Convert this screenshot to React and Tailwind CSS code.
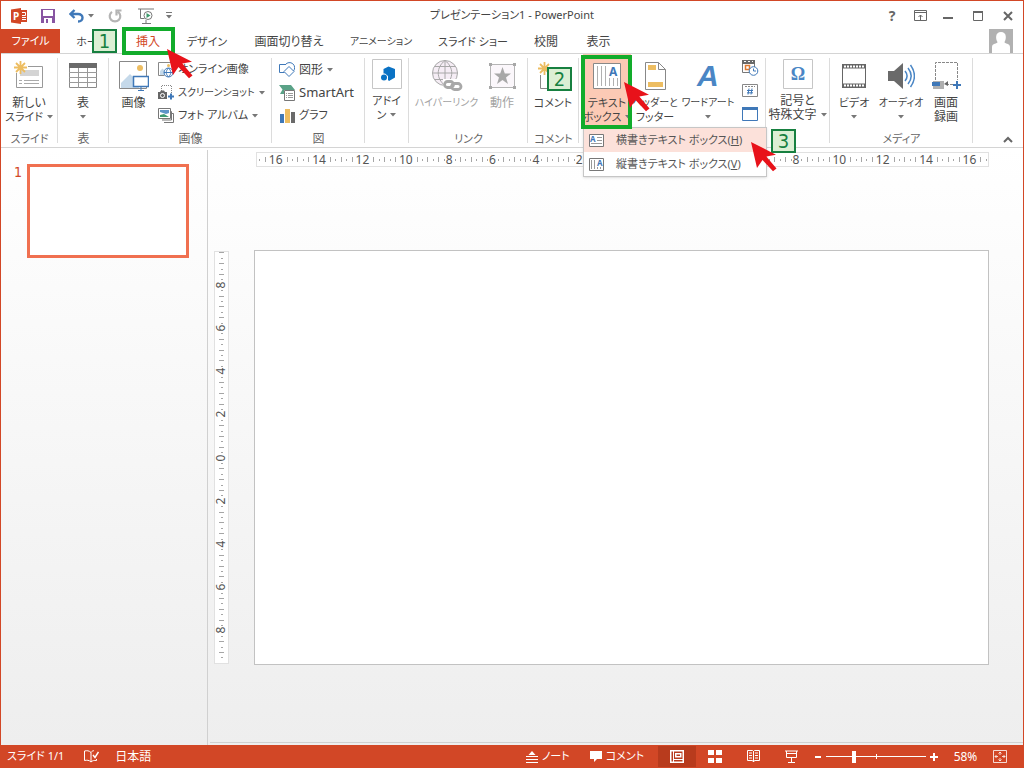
import React, { useState } from 'react';

const tabs = [
    { label: 'ホーム', width: 'w-16' },
    { label: '挿入', width: 'w-12' },
    { label: 'デザイン', width: 'w-[70px]' },
    { label: '画面切り替え', width: 'w-[94px]' },
    { label: 'アニメーション', width: 'w-[90px]' },
    { label: 'スライド ショー', width: 'w-[94px]' },
    { label: '校閲', width: 'w-[52px]' },
    { label: '表示', width: 'w-[53px]' },
];

const hRuler = [16, 14, 12, 10, 8, 6, 4, 2, 0, 2, 4, 6, 8, 10, 12, 14, 16];
// the outer cells only carry ticks
const vRuler = [null, 8, 6, 4, 2, 0, 2, 4, 6, 8, null];

// Katakana labels are set smaller than kanji ones, long ones smaller still
const labelSize = (label) => {
    if (/^[ァ-ヶーと]{5,}$/.test(label)) return 'text-[10px]';
    return /[ァ-ヶ]/.test(label) ? 'text-[11px]' : 'text-xs';
};

const Icon = ({ w, h, children, className = '' }) => (
    <svg width={w} height={h} viewBox={`0 0 ${w} ${h}`} fill="none" className={`shrink-0 ${className}`} aria-hidden="true">
        {children}
    </svg>
);

const Caret = ({ color = '#777' }) => (
    <Icon w={6} h={4}><path d="M0 0h6L3 3.5z" fill={color} /></Icon>
);

// Red pointer, tip at the top left corner
const Pointer = ({ className }) => (
    <Icon w={26} h={30} className={`pointer-events-none absolute z-40 ${className}`}>
        <path d="M0 0L25 12.700L15.300 14.500L25.500 26.500L22 29.300L11.500 18L6 26z" fill="#e8121a" />
    </Icon>
);

const Step = ({ n, className }) => (
    <span className={`absolute z-30 flex h-6 w-[25px] items-center justify-center border-2 border-[#178040] bg-[#dcefd4] font-['DejaVu_Sans_Condensed','DejaVu_Sans',sans-serif] text-xl leading-5 text-[#178040] ${className}`}>
        {n}
    </span>
);

const Spark = () => (
    <path d="M6.500 0v13M0 6.500h13M2 2l9 9M11 2l-9 9" stroke="#edbd61" strokeWidth="1.800" />
);

/* ---------- quick access ---------- */

const PptLogo = () => (
    <Icon w={17} h={16}>
        <path d="M8 2h8v12H8z" fill="#d24726" />
        <path d="M11 4.500h3.500v3H11M11 9.500h4M11 11.500h4" stroke="#fff" />
        <path d="M0 1.500L10 0v16L0 14.500z" fill="#d24726" />
        <text x="2" y="12" fontSize="10" fontWeight="700" fill="#fff">P</text>
    </Icon>
);

const SaveIcon = () => (
    <Icon w={14} h={14}>
        <path d="M0 0h14v14H0z" fill="#8855a2" />
        <path d="M2 1h10v6H2zM3 9h8v5H3z" fill="#fff" />
        <path d="M5 10h2v4H5z" fill="#8855a2" />
    </Icon>
);

const UndoIcon = () => (
    <Icon w={15} h={14}>
        <path d="M5.500 1L1.500 5L5.500 9M2 5h7c6 0 6 7.500 0 7.500" stroke="#3f78b8" strokeWidth="2.400" />
    </Icon>
);

const RedoIcon = () => (
    <Icon w={14} h={14}>
        <path d="M4 2.800a5.300 5.300 0 1 0 6 0M8.500 6.500V1.500h5" stroke="#b4b4b4" strokeWidth="2.200" />
    </Icon>
);

const ShowIcon = () => (
    <Icon w={16} h={16}>
        <path d="M0 1h16M2.500 1v9.500h4M8 12v3M4 15.500h9" stroke="#777" />
        <circle cx="10" cy="7.500" r="4" fill="#fff" stroke="#777" />
        <path d="M8.500 5l4 2.500-4 2.500z" fill="#3c9a6b" />
    </Icon>
);

/* ---------- ribbon icons ---------- */

const NewSlideIcon = () => (
    <Icon w={30} h={30}>
        <path d="M2.500 12v14.500h26V5.500H14" stroke="#999" />
        <path d="M6 9h19v6H6z" fill="#d4d4d4" />
        <path d="M5 19.500h3M5 22.500h3M10 19.500h15M10 22.500h15" stroke="#aaa" />
        <Spark />
    </Icon>
);

const TableIcon = () => (
    <Icon w={28} h={26}>
        <path d="M.5.5h27v24H.5z" fill="#fff" stroke="#8a8a8a" />
        <path d="M0 0h28v5H0z" fill="#6a6a6a" />
        <path d="M0 9.500h28M0 14.500h28M0 19.500h28M9.500 5v20M18.500 5v20" stroke="#9a9a9a" />
    </Icon>
);

const PictureIcon = () => (
    <Icon w={30} h={30}>
        <path d="M.5.5h27v27H.5z" fill="#fff" stroke="#888" />
        <circle cx="21" cy="7" r="3" fill="#edbd61" />
        <path d="M2 27V22l9-9 9 9v5z" fill="#c5d9ea" />
        <path d="M14.500 15.500h15v10h-15z" fill="#fff" stroke="#3f78b8" strokeWidth="1.500" />
        <path d="M22 26v3M19 29.500h6" stroke="#3f78b8" />
    </Icon>
);

const OnlinePictureIcon = () => (
    <Icon w={16} h={16}>
        <path d="M14.500 6V.5H.5v13h6" stroke="#888" />
        <circle cx="10.500" cy="3.500" r="1.500" fill="#edbd61" />
        <path d="M2 13V9l2.500-2.500L8 10l-1 3z" fill="#c5d9ea" />
        <circle cx="10.500" cy="10.500" r="4.500" fill="#fff" stroke="#3f78b8" />
        <path d="M6 10.500h9M10.500 6c-3 3-3 6 0 9M10.500 6c3 3 3 6 0 9" stroke="#3f78b8" />
    </Icon>
);

const ScreenshotIcon = () => (
    <Icon w={16} h={15}>
        <path d="M3.500 6V.5h10V9" stroke="#888" strokeDasharray="1 1" />
        <path d="M0 7h2l1-1.500h3L7 7h2v7H0z" fill="#666" />
        <circle cx="4.500" cy="10.500" r="2" stroke="#fff" />
        <path d="M13 8.500v6M10 11.500h6" stroke="#3f78b8" strokeWidth="2" />
    </Icon>
);

const AlbumIcon = () => (
    <Icon w={16} h={15}>
        <path d="M12 3.500h1.500v8.500H4M14 5.500h1.500v9H6" stroke="#777" />
        <path d="M.5.500h12v10H.5z" fill="#fff" stroke="#777" />
        <path d="M2 2h9v3L8 6 2 4z" fill="#5d94c8" />
        <path d="M2 9V7l4-1 5 3z" fill="#3f9a74" />
    </Icon>
);

const ShapesIcon = () => (
    <Icon w={16} h={15}>
        <path d="M7 2.500H.5v8h5" stroke="#3f78b8" />
        <path d="M6.500 2.500a5 5 0 1 1 8 6.500" stroke="#3f78b8" />
        <path d="M10 4.500l5 5-5 5-5-5z" fill="#fff" stroke="#3f78b8" />
    </Icon>
);

const SmartArtIcon = () => (
    <Icon w={16} h={16}>
        <path d="M0 0h12l4 5H5v4H1L3.500 4.500z" fill="#5aa287" />
        <path d="M5.500 5.500h10v10h-10z" fill="#fff" stroke="#777" />
        <path d="M7 8.500h1M7 10.500h1M7 12.500h1M9 8.500h5M9 10.500h5M9 12.500h5" stroke="#999" />
    </Icon>
);

const ChartIcon = () => (
    <Icon w={15} h={14}>
        <path d="M0 5h4v9H0z" fill="#3f78b8" />
        <path d="M5 0h5v14H5z" fill="#edbd61" />
        <path d="M11 3h4v11h-4z" fill="#6a6a6a" />
    </Icon>
);

const AddinIcon = () => (
    <Icon w={30} h={30}>
        <path d="M.5.5h29v29H.5z" fill="#fff" stroke="#c6c6c6" />
        <path d="M11.500 10l5-2.500 6.500 2.500v8.500L17 22l-1-1v-4l-3-2.500h-1.500z" fill="#0a72c4" />
        <circle cx="12" cy="18.500" r="3" fill="#0a72c4" />
    </Icon>
);

const LinkIcon = () => (
    <Icon w={32} h={32}>
        <circle cx="14" cy="13" r="12.500" fill="#f5edf5" stroke="#a8a8a8" />
        <path d="M2 13h24M14 .5v25M4 6.500h20M4 19.500h20M14 .5c-9 7-9 18 0 25M14 .5c9 7 9 18 0 25" stroke="#a8a8a8" />
        <path d="M12 19h20v12H12z" fill="#fff" />
        <rect x="13.500" y="21.500" width="9" height="6" rx="3" stroke="#a8a8a8" strokeWidth="2.800" />
        <rect x="20.500" y="23.500" width="9.500" height="6" rx="3" stroke="#a8a8a8" strokeWidth="2.800" />
    </Icon>
);

const ActionIcon = () => (
    <Icon w={27} h={26}>
        <path d="M1.500 1.500h24v23h-24z" fill="#fbf7fb" stroke="#b5b5b5" />
        <path d="M0 0h3v3H0zM24 0h3v3h-3zM0 23h3v3H0zM24 23h3v3h-3z" fill="#a8a8a8" />
        <path d="M13.500 4l2.300 6.500h6.200l-5 4 2 6.500-5.500-4-5.500 4 2-6.500-5-4h6.200z" fill="#a8a8a8" />
    </Icon>
);

const CommentIcon = () => (
    <Icon w={31} h={29}>
        <path d="M2.500 13v13.500h7" stroke="#888" />
        <Spark />
    </Icon>
);

const TextBoxIcon = () => (
    <Icon w={28} h={26}>
        <path d="M.5.5h27v25H.5z" fill="#fff" stroke="#888" />
        <path d="M4.500 3v20M8.500 3v20M12.500 3v20M16.500 15v8M20.500 15v8M24.500 15v8" stroke="#b0b0b0" />
        <text x="16" y="13" fontSize="12" fontWeight="700" fill="#3f78b8">A</text>
    </Icon>
);

const HeaderIcon = () => (
    <Icon w={21} h={28}>
        <path d="M.5.500h13l7 7v20H.5z" fill="#fff" stroke="#888" />
        <path d="M13.500.5v7h7" stroke="#888" />
        <path d="M3 3h8v5H3zM3 20h15v5H3z" fill="#edbd61" />
    </Icon>
);

const WordArtIcon = () => (
    <Icon w={24} h={34}>
        <text x="1" y="27" fontSize="30" fontStyle="italic" fontWeight="700" fontFamily="Liberation Sans" fill="#4a86c5">A</text>
    </Icon>
);

const DateIcon = () => (
    <Icon w={17} h={16}>
        <path d="M.5 1.500h12v11H.5z" fill="#fff" stroke="#777" />
        <path d="M0 0h13v4H0z" fill="#6a6a6a" />
        <path d="M2 1.500h2M6 1.500h2M10 1.500h1" stroke="#fff" />
        <path d="M3.500 5.500h4v4h-4z" stroke="#e07a30" strokeWidth="1.500" />
        <circle cx="11.500" cy="11" r="4.300" fill="#fff" stroke="#3f78b8" />
        <path d="M11.500 8.500V11h2.500" stroke="#3f78b8" />
    </Icon>
);

const NumberIcon = () => (
    <Icon w={16} h={13}>
        <path d="M.5.5h15v12H.5z" fill="#fff" stroke="#888" />
        <path d="M3 2.500h10" stroke="#888" strokeDasharray="2 1" />
        <path d="M7 4.500l-1 6M10 4.500l-1 6M5 6.500h6M5 8.800h6" stroke="#3f78b8" />
    </Icon>
);

const ObjectIcon = () => (
    <Icon w={16} h={14}>
        <path d="M.5.5h15v13H.5z" fill="#fff" stroke="#3f78b8" />
        <path d="M0 0h16v3H0z" fill="#3f78b8" />
    </Icon>
);

const OmegaIcon = () => (
    <Icon w={30} h={30}>
        <path d="M.5.5h29v29H.5z" fill="#fff" stroke="#c6c6c6" />
        <text x="15" y="21" textAnchor="middle" fontSize="18" fontWeight="700" fontFamily="Liberation Serif" fill="#4a86c5">Ω</text>
    </Icon>
);

const VideoIcon = () => (
    <Icon w={24} h={24}>
        <path d="M.5.5h23v23H.5z" fill="#fff" stroke="#666" />
        <path d="M0 0h24v4.500H0zM0 19.500h24V24H0z" fill="#666" />
        <path d="M2 2.500h21M2 21.500h21" stroke="#fff" strokeWidth="2" strokeDasharray="2 1" />
    </Icon>
);

const AudioIcon = () => (
    <Icon w={27} h={26}>
        <path d="M0 8h6l9-8v26l-9-8H0z" fill="#6a6a6a" />
        <path d="M17 8c2.500 3 2.500 7 0 10M20 5c4 5 4 11 0 16M22.500 2c5 7 5 15 0 22" stroke="#4a86c5" strokeWidth="1.500" />
    </Icon>
);

const RecordIcon = () => (
    <Icon w={29} h={28}>
        <path d="M3.500 18V.5h22V18M14 22.500h7" stroke="#888" strokeDasharray="3 1" />
        <path d="M1 19h11v8H1z" fill="#b0b0b0" />
        <path d="M0 20h8v4H0z" fill="#3f78b8" />
        <path d="M12 22l4-3v5z" fill="#666" />
        <path d="M25 19v8M21 23h8" stroke="#3f78b8" strokeWidth="2" />
    </Icon>
);

const HorizontalTextIcon = () => (
    <Icon w={15} h={13}>
        <path d="M.5.5h14v12H.5z" fill="#fff" stroke="#777" />
        <text x="1" y="8" fontSize="8" fontWeight="700" fill="#3f78b8">A</text>
        <path d="M8 3.500h5M8 6.500h5M2 9.500h11" stroke="#999" />
    </Icon>
);

const VerticalTextIcon = () => (
    <Icon w={15} h={13}>
        <path d="M.5.500h14v12H.5z" fill="#fff" stroke="#777" />
        <text x="8" y="8" fontSize="8" fontWeight="700" fill="#3f78b8">A</text>
        <path d="M2.500 2v9M5.500 2v9M8.500 9v2M11.500 9v2" stroke="#999" />
    </Icon>
);

/* ---------- ribbon parts ---------- */

const Group = ({ label, width, children }) => (
    <section className={`relative flex h-[93px] shrink-0 flex-col ${width}`}>
        <div className="flex h-[77px] items-start">{children}</div>
        {label && <div className={`text-center leading-4 text-[#666] ${labelSize(label)}`}>{label}</div>}
        <span className="absolute right-0 top-1 h-[85px] w-px bg-[#dcdcdc]" />
    </section>
);

// lines holds one or two rows; a caret follows the last row or stands below it
const BigButton = ({ icon, lines, caret, width, raised, disabled, className = '', children }) => (
    <div className={`relative h-[73px] shrink-0 ${width}`}>
        <button type="button" disabled={disabled} className={`flex h-full w-full flex-col items-center ${disabled ? 'text-[#a3a3a3]' : 'text-[#444]'} ${className}`}>
            <span className={`flex shrink-0 items-center justify-center ${raised ? 'h-10' : 'h-[42px] pt-0.5'}`}>{icon}</span>
            {lines.map((line, i) => (
                <span key={line} className={`flex h-3.5 shrink-0 items-center gap-1 whitespace-nowrap ${labelSize(line)}`}>
                    {line}
                    {caret && lines.length === 2 && i === 1 && <Caret />}
                </span>
            ))}
            {caret && lines.length === 1 && <span className="flex h-3.5 items-center"><Caret /></span>}
        </button>
        {children}
    </div>
);

const SmallButton = ({ icon, label, caret, className }) => (
    <button type="button" className={`flex h-[23px] items-center gap-1 whitespace-nowrap text-[#444] ${className || labelSize(label)}`}>
        <span className="flex w-4 shrink-0 justify-center">{icon}</span>
        {label}
        {caret && <Caret />}
    </button>
);

const Tick = ({ index, vertical }) => {
    if (index === 4) return <span className="flex-1" />;
    const long = index % 2 === 0;
    return (
        <span className={`flex flex-1 ${vertical ? 'flex-col items-center' : 'items-center'}`}>
            <span className={`bg-[#a6a6a6] ${vertical ? (long ? 'h-px w-[5px]' : 'h-px w-[2px]') : (long ? 'h-[5px] w-px' : 'h-[2px] w-px')}`} />
        </span>
    );
};

const Ruler = ({ marks, vertical, className }) => (
    <div className={`flex overflow-hidden border border-[#e1e1e1] bg-white text-xs leading-3 text-[#555] ${className}`}>
        <div className={vertical ? '-my-8 flex flex-1 flex-col' : '-mx-[3px] flex flex-1'}>
            {marks.map((mark, i) => (
                <div key={i} className={`relative flex flex-1 ${vertical ? 'flex-col' : ''}`}>
                    {[0, 1, 2, 3, 4, 5, 6, 7].map((n) => <Tick key={n} index={n} vertical={vertical} />)}
                    {mark !== null && (
                        <span className="absolute inset-0 flex items-center justify-center">
                            <span className={vertical ? '-rotate-90' : 'bg-white px-px'}>{mark}</span>
                        </span>
                    )}
                </div>
            ))}
        </div>
    </div>
);

const TitleBar = () => (
    <header className="grid h-7 grid-cols-[1fr_auto_1fr] items-center pt-px">
        <div className="flex items-center pl-2.5">
            <PptLogo />
            <button type="button" aria-label="上書き保存" className="ml-[13px]"><SaveIcon /></button>
            <button type="button" aria-label="元に戻す" className="ml-3.5 flex items-center gap-1"><UndoIcon /><Caret /></button>
            <button type="button" aria-label="やり直し" className="ml-3.5"><RedoIcon /></button>
            <button type="button" aria-label="スライド ショーの開始" className="ml-4"><ShowIcon /></button>
            <button type="button" aria-label="クイック アクセスのカスタマイズ" className="ml-3">
                <Icon w={6} h={7}><path d="M0 .5h6" stroke="#777" /><path d="M0 3h6L3 6.500z" fill="#777" /></Icon>
            </button>
        </div>
        <h1 className="text-[11px]">プレゼンテーション1 - PowerPoint</h1>
        <div className="flex items-center justify-end gap-4 pr-2.5">
            <button type="button" className="w-3 text-sm font-bold text-[#666]">?</button>
            <button type="button" aria-label="リボンの表示オプション">
                <Icon w={13} h={11}><path d="M.5.5h12v10H.5zM0 2.500h13M6.500 10V5M4.500 7l2-2 2 2" stroke="#666" /></Icon>
            </button>
            <button type="button" aria-label="最小化">
                <Icon w={10} h={10}><path d="M0 7h10" stroke="#666" strokeWidth="2" /></Icon>
            </button>
            <button type="button" aria-label="最大化" className="ml-1">
                <Icon w={10} h={10}><path d="M.5.5h9v9H.5z" stroke="#666" /><path d="M0 1h10" stroke="#666" strokeWidth="2" /></Icon>
            </button>
            <button type="button" aria-label="閉じる" className="ml-1">
                <Icon w={10} h={10}><path d="M1 1l8 8M9 1l-8 8" stroke="#666" strokeWidth="2" /></Icon>
            </button>
        </div>
    </header>
);

const TabBar = ({ active, onSelect }) => (
    <nav className="flex h-[25px] items-stretch border-b border-[#d4d4d4]">
        <button type="button" className="w-[59px] bg-[#d24726] text-[11px] text-white">ファイル</button>
        {tabs.map(({ label, width }) => (
            <div key={label} className={`relative flex ${width}`}>
                <button
                    type="button"
                    onClick={() => onSelect(label)}
                    className={`w-full whitespace-nowrap pt-0.5 ${labelSize(label)} ${active === label ? 'text-[#d24726]' : 'text-[#444]'}`}
                >
                    {label}
                </button>
                {label === 'ホーム' && <Step n={1} className="left-8 top-0" />}
                {label === '挿入' && (
                    <>
                        <span className="pointer-events-none absolute -left-0.5 -top-0.5 z-20 h-7 w-[53px] border-4 border-[#12ac2b]" />
                        <Pointer className="left-[43px] top-5" />
                    </>
                )}
            </div>
        ))}
        <Icon w={24} h={24} className="ml-auto mr-2.5">
            <path d="M0 0h24v24H0z" fill="#b1b1b1" />
            <path d="M12 3c6 0 5.500 7 3.500 10 0 2 5.500 1 5.500 5v6H3v-6c0-4 5.500-3 5.500-5C6.500 10 6 3 12 3z" fill="#fff" />
        </Icon>
    </nav>
);

const TextBoxMenu = () => (
    <div role="menu" className="absolute left-0 top-[73px] z-20 w-[184px] border border-[#c6c6c6] bg-white text-[11px] text-[#555] shadow-sm">
        <button type="button" role="menuitem" className="flex h-6 w-full items-center gap-3 whitespace-nowrap bg-[#fce1da] pl-[5px]">
            <HorizontalTextIcon />
            <span>横書きテキスト ボックス(<u>H</u>)</span>
        </button>
        <button type="button" role="menuitem" className="flex h-6 w-full items-center gap-3 whitespace-nowrap pl-[5px]">
            <VerticalTextIcon />
            <span>縦書きテキスト ボックス(<u>V</u>)</span>
        </button>
        <Pointer className="left-[167px] top-3.5" />
        <Step n={3} className="left-[187px] top-px" />
    </div>
);

const Ribbon = () => (
    <div className="flex h-[94px] border-b border-[#d4d4d4]">
        <Group label="スライド" width="w-[57px]">
            <BigButton width="w-14" icon={<NewSlideIcon />} lines={['新しい', 'スライド']} caret />
        </Group>
        <Group label="表" width="w-[51px]">
            <BigButton width="w-[50px]" icon={<TableIcon />} lines={['表']} caret />
        </Group>
        <Group label="画像" width="w-[163px]">
            <BigButton width="w-[49px]" icon={<PictureIcon />} lines={['画像']} />
            <div className="flex flex-col pt-1">
                <SmallButton icon={<OnlinePictureIcon />} label="オンライン画像" />
                <SmallButton icon={<ScreenshotIcon />} label="スクリーンショット" caret />
                <SmallButton icon={<AlbumIcon />} label="フォト アルバム" caret />
            </div>
        </Group>
        <Group label="図" width="w-[93px]">
            <div className="flex flex-col pl-[7px] pt-1">
                <SmallButton icon={<ShapesIcon />} label="図形" caret />
                <SmallButton icon={<SmartArtIcon />} label="SmartArt" className="text-[13px]" />
                <SmallButton icon={<ChartIcon />} label="グラフ" />
            </div>
        </Group>
        <Group width="w-11">
            <BigButton width="w-[43px]" icon={<AddinIcon />} lines={['アドイ', 'ン']} caret raised />
        </Group>
        <Group label="リンク" width="w-[119px]">
            <BigButton width="w-[75px]" icon={<LinkIcon />} lines={['ハイパーリンク']} disabled />
            <BigButton width="w-9" icon={<ActionIcon />} lines={['動作']} disabled />
        </Group>
        <Group label="コメント" width="w-[51px]">
            <BigButton width="w-[50px]" icon={<CommentIcon />} lines={['コメント']}>
                <Step n={2} className="left-[19px] top-[13px]" />
            </BigButton>
        </Group>
        <Group width="w-[187px]">
            <BigButton width="ml-1 w-12" icon={<TextBoxIcon />} lines={['テキスト', 'ボックス']} caret className="bg-[#fccab5]">
                <span className="pointer-events-none absolute -left-0.5 top-px z-30 h-[74px] w-[51px] border-4 border-[#12ac2b]" />
                <Pointer className="left-[41px] top-7" />
                <TextBoxMenu />
            </BigButton>
            <BigButton width="w-12" icon={<HeaderIcon />} lines={['ヘッダーと', 'フッター']} />
            <BigButton width="w-[58px]" icon={<WordArtIcon />} lines={['ワードアート']} caret />
            <div className="flex flex-col pl-[5px] pt-0.5">
                <button type="button" aria-label="日付と時刻" className="flex h-[23px] items-center"><DateIcon /></button>
                <button type="button" aria-label="スライド番号" className="flex h-[23px] items-center"><NumberIcon /></button>
                <button type="button" aria-label="オブジェクト" className="flex h-[23px] items-center"><ObjectIcon /></button>
            </div>
        </Group>
        <Group width="w-16">
            <BigButton width="w-[63px]" icon={<OmegaIcon />} lines={['記号と', '特殊文字']} caret raised />
        </Group>
        <Group label="メディア" width="w-[143px]">
            <BigButton width="w-[48px]" icon={<VideoIcon />} lines={['ビデオ']} caret />
            <BigButton width="w-[46px]" icon={<AudioIcon />} lines={['オーディオ']} caret />
            <BigButton width="w-11" icon={<RecordIcon />} lines={['画面', '録画']} />
        </Group>
        <button type="button" aria-label="リボンを折りたたむ" className="mb-1 ml-auto mr-2.5 self-end">
            <Icon w={10} h={7}><path d="M1 6l4-4 4 4" stroke="#666" strokeWidth="2" /></Icon>
        </button>
    </div>
);

const StatusBar = () => (
    <footer className="flex h-[23px] items-center bg-[#d24726] text-[11px] text-white">
        <span className="pl-1.5">スライド 1/1</span>
        <button type="button" aria-label="スペル チェック" className="ml-5">
            <Icon w={15} h={13}>
                <path d="M7 2.500C5 .5 3 .5.500 1v9.500c2.500-.5 4.500-.5 6.500 1.500V2.500C8 1 9 .7 10 .7M7 12c1.500-1.500 3-1.700 5.500-1.500V9" stroke="#fff" />
                <path d="M9 5l2 2.500L14.500 2" stroke="#fff" strokeWidth="1.500" />
            </Icon>
        </button>
        <button type="button" className="ml-4 text-xs">日本語</button>

        <div className="ml-auto flex h-full items-center pr-4">
            <button type="button" className="mr-5 flex items-center gap-1">
                <Icon w={12} h={12}><path d="M6 0l3.500 4h-7z" fill="#fff" /><path d="M0 5.500h12M0 8.500h12M0 11.500h12" stroke="#fff" /></Icon>
                ノート
            </button>
            <button type="button" className="mr-3.5 flex items-center gap-1">
                <Icon w={12} h={11}><path d="M0 0h12v8H7l-3 3V8H0z" fill="#fff" /></Icon>
                コメント
            </button>
            <button type="button" aria-label="標準" className="flex h-[21px] w-[38px] items-center justify-center bg-[#b83b1d]">
                <Icon w={14} h={13}>
                    <path d="M.75.75h12.500v11.500H.75z" stroke="#fff" strokeWidth="1.500" />
                    <path d="M3.500 1v11M4 9.500h9" stroke="#fff" />
                    <path d="M5.750 3.750h5v3h-5z" stroke="#fff" strokeWidth="1.500" />
                </Icon>
            </button>
            <button type="button" aria-label="スライド一覧" className="flex w-[38px] justify-center">
                <Icon w={14} h={13}><path d="M0 0h6v5H0zM8 0h6v5H8zM0 8h6v5H0zM8 8h6v5H8z" fill="#fff" /></Icon>
            </button>
            <button type="button" aria-label="閲覧表示" className="flex w-[38px] justify-center">
                <Icon w={13} h={13}>
                    <path d="M.5.500h5l1 1 1-1h5v10h-5l-1 1.500-1-1.500h-5zM6.500 1v11M2 3h3M2 5.500h3M2 8h3M8 3h3M8 5.500h3M8 8h3" stroke="#fff" />
                </Icon>
            </button>
            <button type="button" aria-label="スライド ショー" className="flex w-[38px] justify-center">
                <Icon w={13} h={13}><path d="M0 1h13M1.500 1v6.500h10V1M6.500 8v4M3 12.500h7M1 3.500h11" stroke="#fff" /></Icon>
            </button>
            <button type="button" aria-label="縮小" className="ml-1"><Icon w={8} h={8}><path d="M1 4h6" stroke="#fff" strokeWidth="2" /></Icon></button>
            <input
                type="range"
                aria-label="ズーム"
                min="0"
                max="100"
                defaultValue="27"
                className="mx-1 h-3 w-[100px] appearance-none bg-[linear-gradient(#fff,#fff),linear-gradient(#fff,#fff)] bg-[length:100%_1px,1px_5px] bg-center bg-no-repeat [&::-webkit-slider-thumb]:h-3 [&::-webkit-slider-thumb]:w-1 [&::-webkit-slider-thumb]:appearance-none [&::-webkit-slider-thumb]:bg-white"
            />
            <button type="button" aria-label="拡大"><Icon w={8} h={8}><path d="M0 4h8M4 0v8" stroke="#fff" strokeWidth="2" /></Icon></button>
            <button type="button" className="w-[55px] text-center text-xs">58%</button>
            <button type="button" aria-label="ウィンドウに合わせる">
                <Icon w={14} h={13}>
                    <path d="M.5.500h13v12H.5z" stroke="#fff" strokeOpacity=".8" />
                    <path d="M7 2v3M5.500 3.500L7 2l1.500 1.500M7 11V8M5.500 9.500L7 11l1.500-1.500M2 6.500h3M3.500 5L2 6.500 3.500 8M12 6.500H9M10.500 5L12 6.500 10.500 8" stroke="#fff" strokeOpacity=".8" />
                </Icon>
            </button>
        </div>
    </footer>
);

export default function App() {
    const [activeTab, setActiveTab] = useState('挿入');

    return (
        <div className="flex min-h-screen flex-col border-x border-t border-[#d24726] bg-white font-['Noto_Sans','Noto_Sans_CJK_JP',sans-serif] text-xs text-[#444] [font-feature-settings:'palt']">
            <TitleBar />
            <TabBar active={activeTab} onSelect={setActiveTab} />
            <Ribbon />

            <main className="flex flex-1 bg-linear-to-b from-white to-[#eee] pt-0.5">
                <aside className="flex w-[207px] shrink-0 items-start gap-1 border-r border-[#d0d0d0] pl-3 pt-3.5">
                    <span className="w-2.5 text-center font-['DejaVu_Sans_Condensed','DejaVu_Sans',sans-serif] text-sm leading-4 text-[#d24726]">1</span>
                    <button type="button" aria-label="スライド 1" className="h-[94px] w-[162px] border-[3px] border-[#f07050] bg-white" />
                </aside>

                <div className="mb-0.5 ml-0.5 flex-1 border-b border-[#d0d0d0] pl-1 pr-[34px] pt-0.5">
                    <div className="pl-[42px]">
                        <Ruler marks={hRuler} className="h-[15px]" />
                    </div>
                    <div className="mt-[83px] flex gap-[25px]">
                        <Ruler marks={vRuler} vertical className="my-px w-[15px]" />
                        <div className="aspect-[735/415] flex-1 border border-[#c2c2c2] bg-white" />
                    </div>
                </div>
            </main>

            <StatusBar />
        </div>
    );
}
